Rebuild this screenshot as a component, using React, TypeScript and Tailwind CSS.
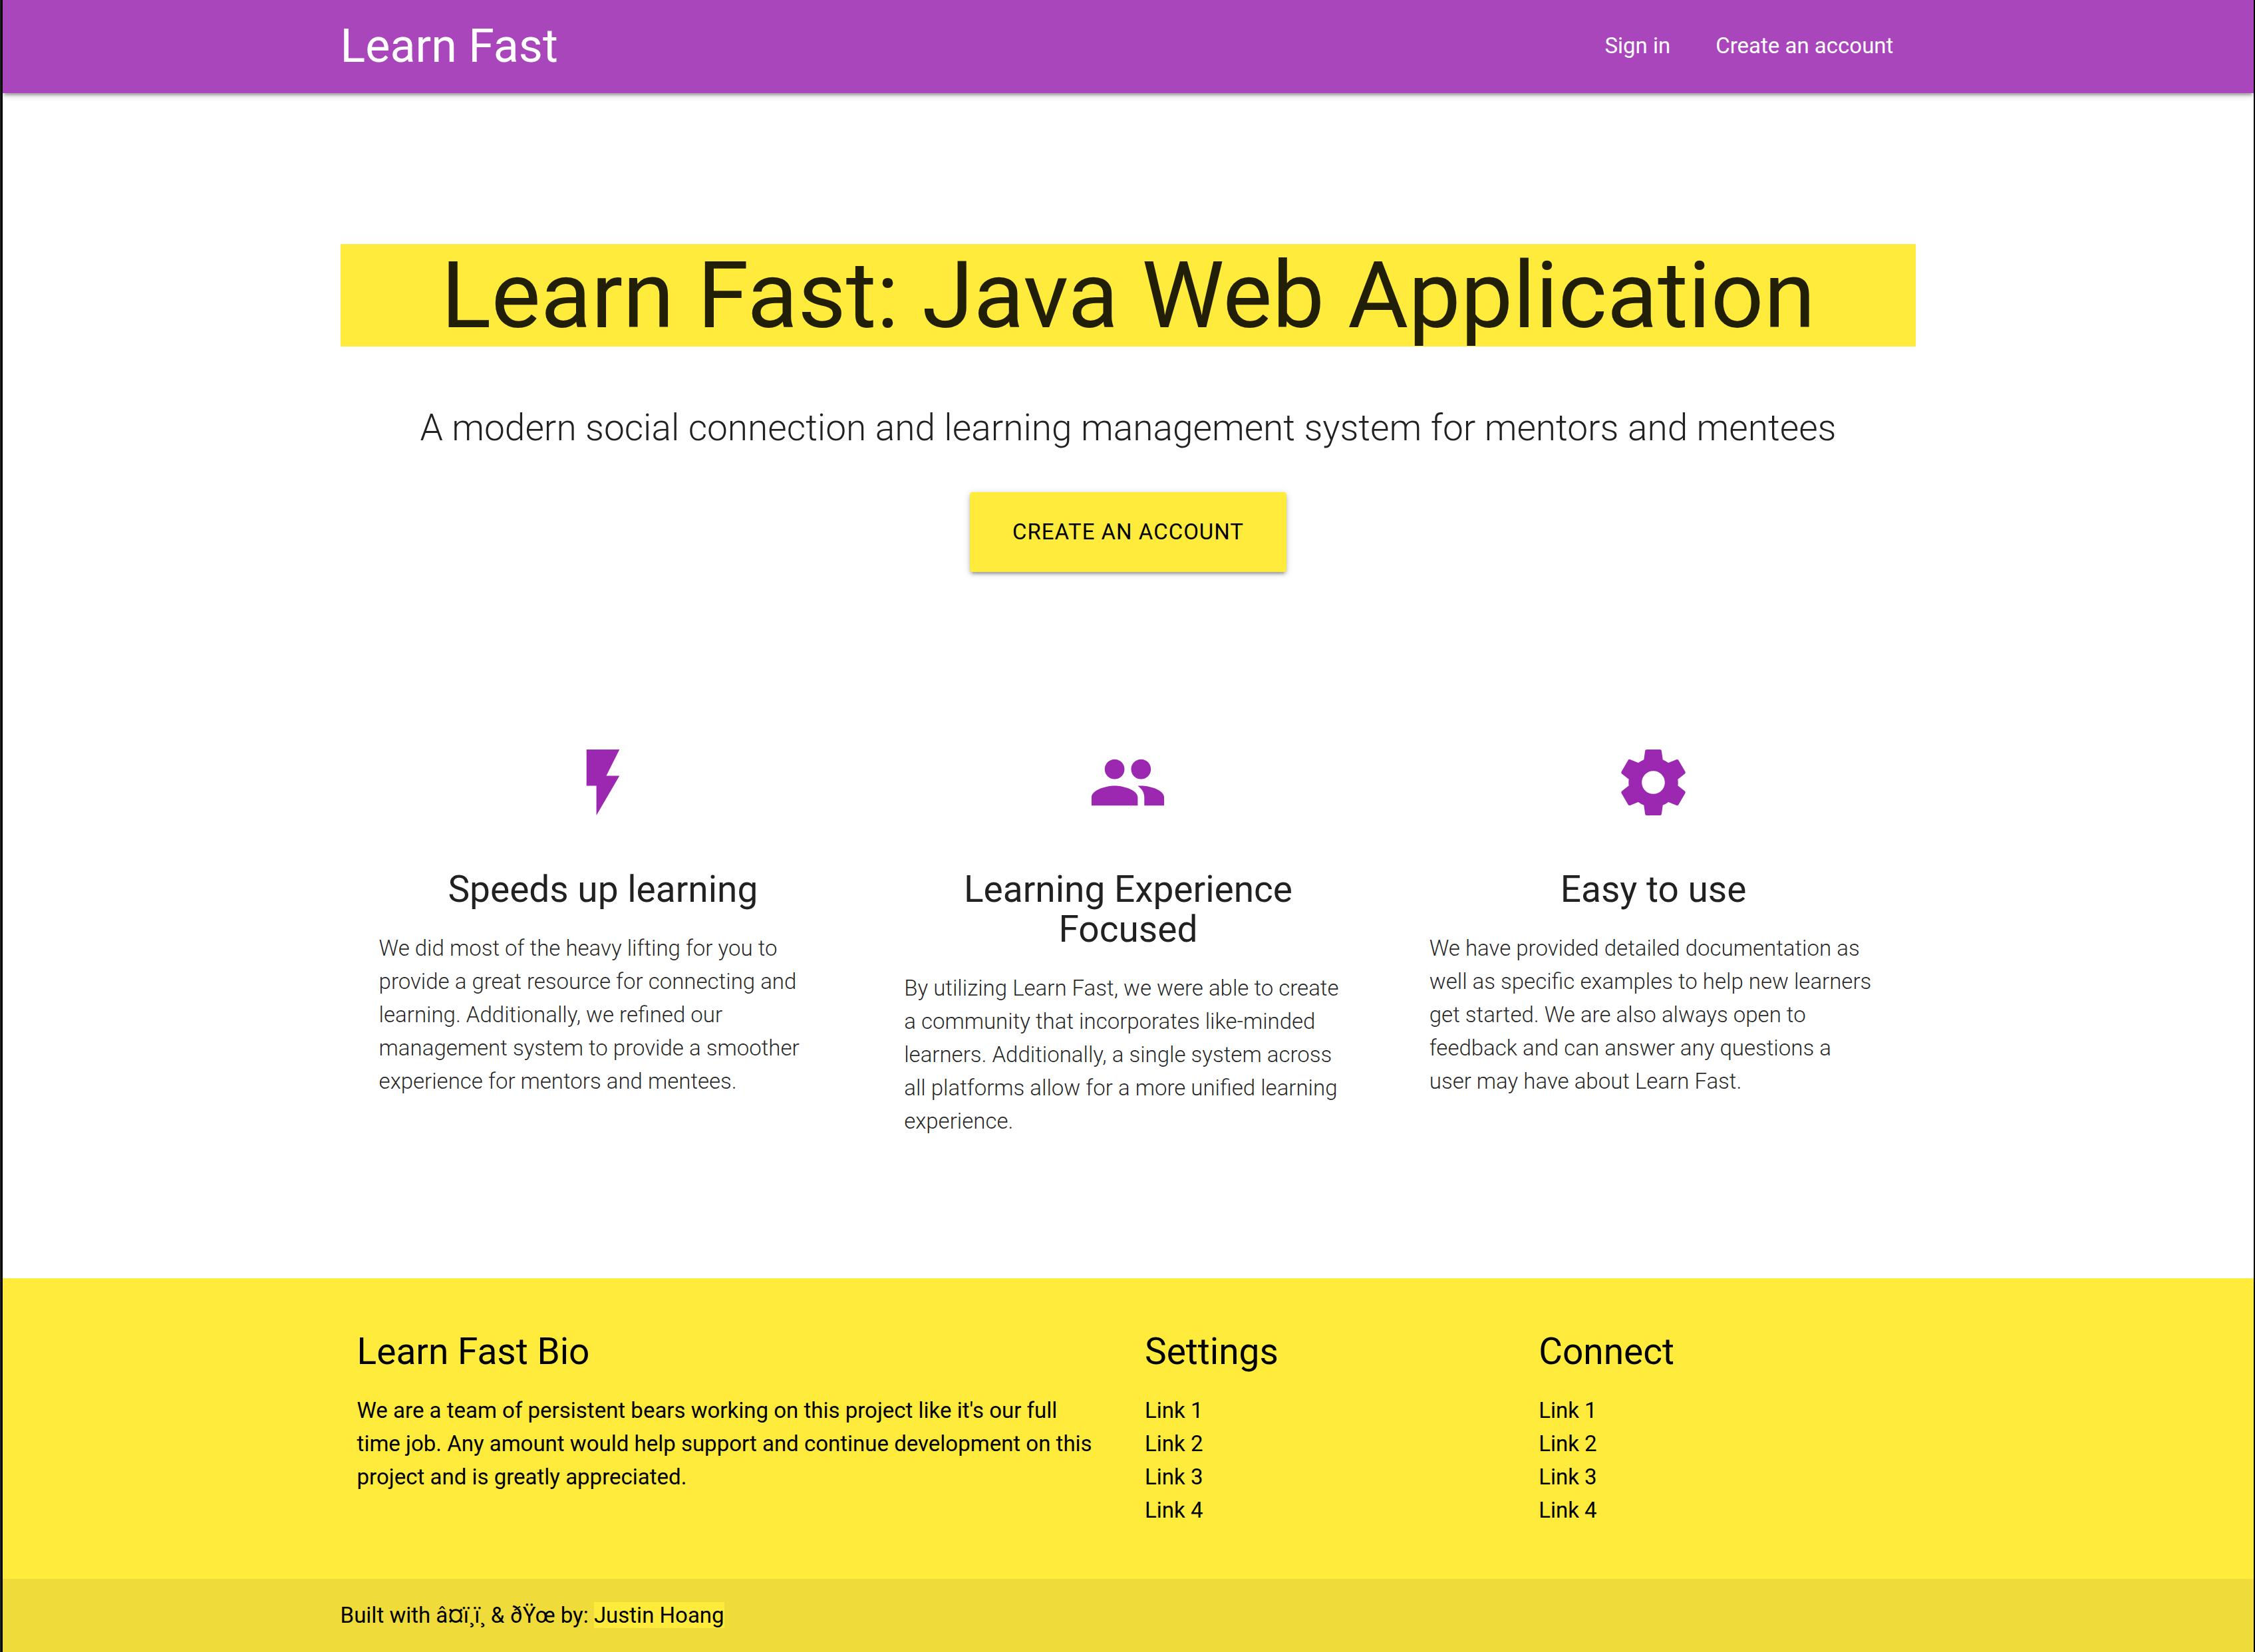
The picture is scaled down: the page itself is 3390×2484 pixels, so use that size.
import type { ReactNode } from "react";

const font = "font-['Roboto','Noto_Sans',sans-serif]";

function Icon({ children }: { children: ReactNode }) {
  return (
    <svg viewBox="0 0 24 24" className="mx-auto size-[119px] fill-[#9c27b0]" aria-hidden="true">
      {children}
    </svg>
  );
}

const features = [
  {
    title: "Speeds up learning",
    text: "We did most of the heavy lifting for you to provide a great resource for connecting and learning. Additionally, we refined our management system to provide a smoother experience for mentors and mentees.",
    icon: <path d="M7 2v11h3v9l7-12h-4l4-8z" />,
  },
  {
    title: "Learning Experience Focused",
    text: "By utilizing Learn Fast, we were able to create a community that incorporates like-minded learners. Additionally, a single system across all platforms allow for a more unified learning experience.",
    icon: (
      <path d="M16 11c1.66 0 2.99-1.34 2.99-3S17.66 5 16 5c-1.66 0-3 1.34-3 3s1.34 3 3 3zm-8 0c1.66 0 2.99-1.34 2.99-3S9.66 5 8 5C6.34 5 5 6.34 5 8s1.34 3 3 3zm0 2c-2.33 0-7 1.17-7 3.5V19h14v-2.5c0-2.33-4.67-3.5-7-3.5zm8 0c-.29 0-.62.02-.97.05 1.16.84 1.97 1.97 1.97 3.45V19h6v-2.5c0-2.33-4.67-3.5-7-3.5z" />
    ),
  },
  {
    title: "Easy to use",
    text: "We have provided detailed documentation as well as specific examples to help new learners get started. We are also always open to feedback and can answer any questions a user may have about Learn Fast.",
    icon: (
      <path d="M19.43 12.98c.04-.32.07-.64.07-.98s-.03-.66-.07-.98l2.11-1.65c.19-.15.24-.42.12-.64l-2-3.46c-.12-.22-.39-.3-.61-.22l-2.49 1c-.52-.4-1.08-.73-1.69-.98l-.38-2.65C14.46 2.18 14.25 2 14 2h-4c-.25 0-.46.18-.49.42l-.38 2.65c-.61.25-1.17.59-1.69.98l-2.49-1c-.23-.09-.49 0-.61.22l-2 3.46c-.13.22-.07.49.12.64l2.11 1.65c-.04.32-.07.65-.07.98s.03.66.07.98l-2.11 1.65c-.19.15-.24.42-.12.64l2 3.46c.12.22.39.3.61.22l2.49-1c.52.4 1.08.73 1.69.98l.38 2.65c.03.24.24.42.49.42h4c.25 0 .46-.18.49-.42l.38-2.65c.61-.25 1.17-.59 1.69-.98l2.49 1c.23.09.49 0 .61-.22l2-3.46c.12-.22.07-.49-.12-.64l-2.11-1.65zM12 15.5c-1.93 0-3.5-1.57-3.5-3.5s1.57-3.5 3.5-3.5 3.5 1.57 3.5 3.5-1.57 3.5-3.5 3.5z" />
    ),
  },
];

const links = ["Link 1", "Link 2", "Link 3", "Link 4"];

function LinkColumn({ title }: { title: string }) {
  return (
    <nav aria-label={title} className="px-[25px]">
      <h5 className="text-[55px] leading-[60px]">{title}</h5>
      <ul className="mt-[34px]">
        {links.map((link) => (
          <li key={link}>
            <a href="#">{link}</a>
          </li>
        ))}
      </ul>
    </nav>
  );
}

export default function App() {
  return (
    <div className="flex min-h-screen bg-white">
      <div className="w-1 shrink-0 border-r-2 border-black bg-[#1f1f1f]" />
      <div className={`${font} flex min-w-0 flex-1 flex-col text-[33px] leading-[50px] text-black/87`}>
        <header className="bg-[#aa46bb] pb-0.5 text-white shadow-[0_4px_4px_0_rgba(0,0,0,0.14),0_7px_2px_-4px_rgba(0,0,0,0.12),0_2px_11px_0_rgba(0,0,0,0.2)]">
          <nav className="mx-auto flex h-[138px] w-[70%] items-center justify-between">
            <a href="#" className="text-[70px] leading-none">
              Learn Fast
            </a>
            <div className="flex">
              <a href="#" className="px-[34px]">
                Sign in
              </a>
              <a href="#" className="px-[34px]">
                Create an account
              </a>
            </div>
          </nav>
        </header>

        <main className="mx-auto w-[70%] flex-1">
          <section className="pt-[227px] text-center">
            <h1 className="bg-[#ffeb3b] text-[140px] leading-[154px]">Learn Fast: Java Web Application</h1>
            <p className="mt-[92px] text-[55px] leading-[60px] font-light">
              A modern social connection and learning management system for mentors and mentees
            </p>
            <button
              type="button"
              className="mx-auto mt-[67px] block h-[120px] rounded-sm bg-[#ffeb3b] px-16 tracking-[1px] text-black uppercase shadow-[0_4px_4px_0_rgba(0,0,0,0.14),0_7px_2px_-4px_rgba(0,0,0,0.12),0_2px_11px_0_rgba(0,0,0,0.2)]"
            >
              Create an account
            </button>
          </section>

          <section className="grid grid-cols-3 pt-[257px] pb-[210px]">
            {features.map((feature) => (
              <article key={feature.title} className="px-[58px]">
                <Icon>{feature.icon}</Icon>
                <h5 className="mt-[71px] text-center text-[55px] leading-[60px]">{feature.title}</h5>
                <p className="mt-[34px] font-light">{feature.text}</p>
              </article>
            ))}
          </section>
        </main>

        <footer className="bg-[#ffeb3b] text-black">
          <div className="mx-auto grid w-[70%] grid-cols-4 pt-20 pb-[78px]">
            <div className="col-span-2 pr-10 pl-[25px]">
              <h5 className="text-[55px] leading-[60px]">Learn Fast Bio</h5>
              <p className="mt-[34px]">
                We are a team of persistent bears working on this project like it's our full time job. Any amount would
                help support and continue development on this project and is greatly appreciated.
              </p>
            </div>
            <LinkColumn title="Settings" />
            <LinkColumn title="Connect" />
          </div>
          <div className="bg-[#333333]/8">
            <p className="mx-auto w-[70%] py-[30px]">
              Built with â¤ï¸ï¸ &amp; ðŸœ by:{" "}
              <a href="#" className="bg-[#ffeb3b]">
                Justin Hoang
              </a>
            </p>
          </div>
        </footer>
      </div>
      <div className="w-0.5 shrink-0 bg-black" />
    </div>
  );
}
